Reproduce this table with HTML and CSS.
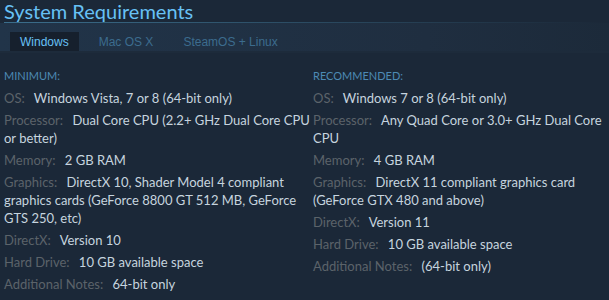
FILE: index.html
```html
<!DOCTYPE html>
<html lang="en">
<head>
  <meta charset="UTF-8" />
  <title>System Requirements</title>
  <link rel="stylesheet" href="styles.css">
</head>
<body>

  <h2 class="title">System Requirements</h2>

  <div class="tabs">
    <div class="tab active">Windows</div>
    <div class="tab">Mac OS X</div>
    <div class="tab">SteamOS + Linux</div>
  </div>

  <div class="sysreq">
    <!-- minimum -->
    <div class="col left">
      <div class="req-head">Minimum:</div>
      <ul>
        <li><strong>OS:</strong> Windows Vista, 7 or 8 (64-bit only)</li>
        <li><strong>Processor:</strong> Dual Core CPU (2.2+ GHz Dual Core CPU or better)</li>
        <li><strong>Memory:</strong> 2 GB RAM</li>
        <li><strong>Graphics:</strong> DirectX 10, Shader Model 4 compliant graphics cards (GeForce 8800 GT 512 MB, GeForce GTS 250, etc)</li>
        <li><strong>DirectX:</strong> Version 10</li>
        <li><strong>Hard Drive:</strong> 10 GB available space</li>
        <li><strong>Additional Notes:</strong> 64-bit only</li>
      </ul>
    </div>

    <!-- recommended -->
    <div class="col right">
      <div class="req-head">Recommended:</div>
      <ul>
        <li><strong>OS:</strong> Windows 7 or 8 (64-bit only)</li>
        <li><strong>Processor:</strong> Any Quad Core or 3.0+ GHz Dual Core CPU</li>
        <li><strong>Memory:</strong> 4 GB RAM</li>
        <li><strong>Graphics:</strong> DirectX 11 compliant graphics card (GeForce GTX 480 and above)</li>
        <li><strong>DirectX:</strong> Version 11</li>
        <li><strong>Hard Drive:</strong> 10 GB available space</li>
        <li><strong>Additional Notes:</strong> (64-bit only)</li>
      </ul>
    </div>
  </div>

</body>
</html>
```

FILE: styles.css
```css
body {
  margin: 0;
  padding: 0 4px;
  background-color: #1b2838;
  font-family: Lato, 'Noto Sans', sans-serif;
  height: 300px;
  overflow: hidden;
}
.title {
  margin: 0;
  padding-bottom: 1px;
  font-size: 20px;
  font-weight: normal;
  line-height: 22px;
  color: #67c1f5;
  background: linear-gradient(to right, #3b6e8c, #1b2838) no-repeat left bottom / 100% 1px;
}
.tabs {
  display: flex;
  align-items: flex-end;
  height: 28px;
  margin: 0 -4px;
  padding-left: 10px;
  background: linear-gradient(to right, #213449, #1f2e40 70%, #1c2a3a);
  border-bottom: 2px solid #1d2b3b;
  font-family: 'Liberation Sans', Arial, sans-serif;
  font-size: 12px;
}
.tab {
  height: 19px;
  line-height: 20px;
  padding: 0 10px;
  margin-right: 10px;
  color: #3c6c8e;
}
.tab.active {
  background-color: #16202d;
  color: #67c1f5;
}
.sysreq {
  display: flex;
  margin-top: 16px;
}
.col.left {
  width: 309px;
}
.col.right {
  flex: 1;
}
.req-head {
  font-size: 11px;
  line-height: 14px;
  text-transform: uppercase;
  color: #4d8ab4;
  margin-bottom: 6px;
}
ul {
  list-style: none;
  margin: 0;
  padding: 0;
}
li {
  font-size: 13px;
  line-height: 18px;
  margin-bottom: 4px;
  color: #c6d4df;
}
li strong {
  font-weight: normal;
  color: #5b636a;
  margin-right: 6px;
}
```
